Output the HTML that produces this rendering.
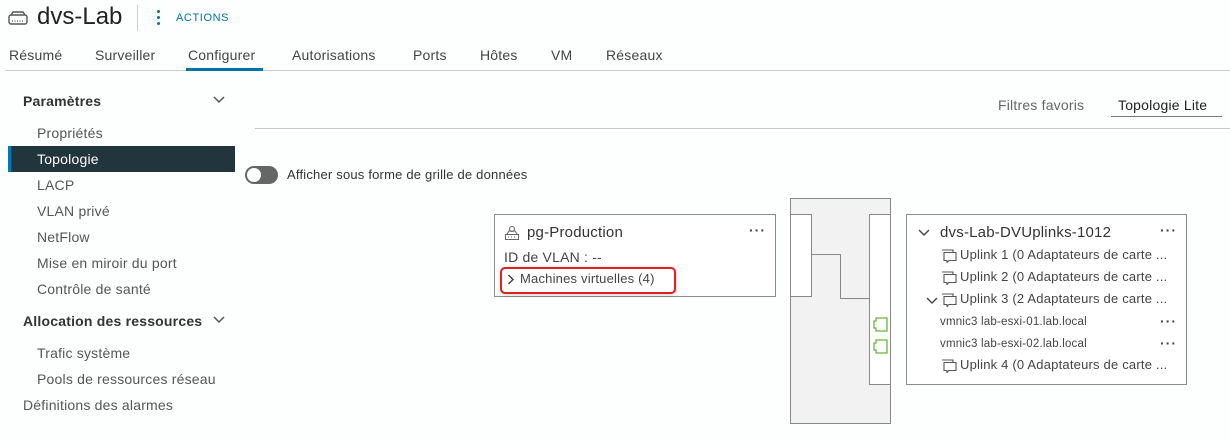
<!DOCTYPE html>
<html><head><meta charset="utf-8"><style>
*{margin:0;padding:0;box-sizing:border-box}
body{width:1230px;height:441px;background:#fdfefe;font-family:"Liberation Sans",sans-serif;color:#333;position:relative;overflow:hidden;letter-spacing:.2px}
.a{position:absolute;white-space:nowrap}
.t{font-size:14px;line-height:16px}
.s{font-size:14px;line-height:16px;color:#565656}
.b{font-weight:bold;font-size:14px;color:#333}
.dots{position:absolute;font-size:14px;letter-spacing:1px;color:#444;font-weight:bold}
</style></head><body>
<svg class="a" style="left:8px;top:11px" width="20" height="14" viewBox="0 0 20 14"><rect x="1" y="4" width="18" height="9" rx="2" fill="none" stroke="#555" stroke-width="1.4"/><path d="M3 4 L5 1 H15 L17 4" fill="none" stroke="#555" stroke-width="1.4"/><path d="M4 10h1M6.5 10h1M9 10h1M11.5 10h1M14 10h1" stroke="#555" stroke-width="1.3"/></svg>
<div class="a" style="left:37px;top:3px;font-size:24px;color:#222;letter-spacing:0">dvs-Lab</div>
<div class="a" style="left:137px;top:5px;width:1px;height:26px;background:#ccc"></div>
<div class="a" style="left:157px;top:10px;width:3px;height:3px;border-radius:2px;background:#0072a3;box-shadow:0 6px 0 #0072a3,0 12px 0 #0072a3"></div>
<div class="a" style="left:176px;top:12px;font-size:11px;color:#0072a3;letter-spacing:.6px">ACTIONS</div>
<div class="a s" style="left:9px;top:47px;color:#444">Résumé</div>
<div class="a s" style="left:95px;top:47px;color:#444">Surveiller</div>
<div class="a s" style="left:188px;top:47px;color:#444">Configurer</div>
<div class="a s" style="left:292px;top:47px;color:#444">Autorisations</div>
<div class="a s" style="left:413px;top:47px;color:#444">Ports</div>
<div class="a s" style="left:480px;top:47px;color:#444">Hôtes</div>
<div class="a s" style="left:551px;top:47px;color:#444">VM</div>
<div class="a s" style="left:606px;top:47px;color:#444">Réseaux</div>
<div class="a" style="left:5px;top:70px;width:1225px;height:1px;background:#ccc"></div>
<div class="a" style="left:186px;top:68px;width:77px;height:3px;background:#0072a3"></div>
<div class="a b" style="left:23px;top:93px">Paramètres</div>
<svg class="a" style="left:213px;top:96px" width="12" height="8"><path d="M1 1l5 5 5-5" fill="none" stroke="#555" stroke-width="1.5"/></svg>
<div class="a s" style="left:37px;top:125px">Propriétés</div>
<div class="a" style="left:8px;top:146px;width:227px;height:26px;background:#22343c"></div>
<div class="a" style="left:8px;top:146px;width:3px;height:26px;background:#0079b8"></div>
<div class="a t" style="left:37px;top:151px;color:#fff">Topologie</div>
<div class="a s" style="left:37px;top:177px">LACP</div>
<div class="a s" style="left:37px;top:203px">VLAN privé</div>
<div class="a s" style="left:37px;top:229px">NetFlow</div>
<div class="a s" style="left:37px;top:255px">Mise en miroir du port</div>
<div class="a s" style="left:37px;top:281px">Contrôle de santé</div>
<div class="a b" style="left:23px;top:313px">Allocation des ressources</div>
<svg class="a" style="left:213px;top:316px" width="12" height="8"><path d="M1 1l5 5 5-5" fill="none" stroke="#555" stroke-width="1.5"/></svg>
<div class="a s" style="left:37px;top:345px">Trafic système</div>
<div class="a s" style="left:37px;top:371px">Pools de ressources réseau</div>
<div class="a s" style="left:23px;top:397px">Définitions des alarmes</div>
<div class="a s" style="left:998px;top:97px;color:#666">Filtres favoris</div>
<div class="a t" style="left:1118px;top:97px;color:#222">Topologie Lite</div>
<div class="a" style="left:1111px;top:116px;width:111px;height:1px;background:#777"></div>
<div class="a" style="left:255px;top:128px;width:975px;height:1px;background:#c8c8c8"></div>
<div class="a" style="left:245px;top:166px;width:33px;height:18px;border-radius:9px;background:#666"></div>
<div class="a" style="left:247px;top:168px;width:14px;height:14px;border-radius:7px;background:#fff"></div>
<div class="a" style="left:287px;top:167px;font-size:13px;color:#333">Afficher sous forme de grille de données</div>
<div class="a" style="left:494px;top:214px;width:282px;height:83px;border:1px solid #8c8c8c;background:#fff"></div>
<svg class="a" style="left:504px;top:225px" width="16" height="16" viewBox="0 0 16 16" fill="none" stroke="#666" stroke-width="1.1"><circle cx="8" cy="4" r="2.5"/><path d="M3 9l2-3h6l2 3M1.5 9.5h13v5h-13zM4 12h1M7 12h1M10 12h1"/></svg>
<div class="a" style="left:527px;top:224px;font-size:15px;color:#333">pg-Production</div>
<div class="dots" style="left:749px;top:222px">···</div>
<div class="a t" style="left:504px;top:249px;color:#444">ID de VLAN : --</div>
<div class="a" style="left:500px;top:267px;width:176px;height:27px;border:2px solid #e02020;border-radius:5px;box-shadow:0 1px 4px rgba(0,0,0,.2)"></div>
<svg class="a" style="left:507px;top:274px" width="8" height="11"><path d="M1.5 1l4.5 4.5-4.5 4.5" fill="none" stroke="#444" stroke-width="1.5"/></svg>
<div class="a" style="left:520px;top:271px;font-size:13px;color:#444">Machines virtuelles (4)</div>
<div class="a" style="left:790px;top:198px;width:101px;height:226px;border:1px solid #888;background:#f2f2f2"></div>
<div class="a" style="left:790px;top:214px;width:22px;height:83px;border:1px solid #888;background:#fff"></div>
<div class="a" style="left:869px;top:214px;width:22px;height:171px;border:1px solid #888;background:#fff"></div>
<svg class="a" style="left:811px;top:254px" width="60" height="50"><path d="M0 .5H29.5V44.5H58" fill="none" stroke="#888" stroke-width="1"/></svg>
<svg class="a" style="left:873px;top:317px" width="16" height="40" fill="none" stroke="#6db33f" stroke-width="1.3"><path d="M3 1h11v13H3V11H1V4h2z"/><path d="M3 23h11v13H3V33H1V26h2z"/></svg>
<div class="a" style="left:906px;top:214px;width:281px;height:171px;border:1px solid #8c8c8c;background:#fff"></div>
<svg class="a" style="left:918px;top:229px" width="12" height="8"><path d="M1 1l5 5 5-5" fill="none" stroke="#444" stroke-width="1.4"/></svg>
<div class="a" style="left:940px;top:224px;font-size:15px;color:#333">dvs-Lab-DVUplinks-1012</div>
<div class="dots" style="left:1160px;top:222px">···</div>
<svg width="0" height="0" style="position:absolute"><defs><symbol id="u" viewBox="0 0 16 14"><path d="M1 1h11v2M3 3.5h12v8H8l-2 2v-2H3z" fill="none" stroke="#555" stroke-width="1.1"/></symbol></defs></svg>
<svg class="a" style="left:941px;top:249px" width="16" height="14"><use href="#u"/></svg>
<div class="a" style="left:960px;top:247px;font-size:13px;color:#444">Uplink 1 (0 Adaptateurs de carte ...</div>
<svg class="a" style="left:941px;top:271px" width="16" height="14"><use href="#u"/></svg>
<div class="a" style="left:960px;top:269px;font-size:13px;color:#444">Uplink 2 (0 Adaptateurs de carte ...</div>
<svg class="a" style="left:926px;top:297px" width="12" height="8"><path d="M1 1l5 5 5-5" fill="none" stroke="#444" stroke-width="1.4"/></svg>
<svg class="a" style="left:941px;top:293px" width="16" height="14"><use href="#u"/></svg>
<div class="a" style="left:960px;top:291px;font-size:13px;color:#444">Uplink 3 (2 Adaptateurs de carte ...</div>
<div class="a" style="left:940px;top:316px;font-size:11.5px;color:#444">vmnic3 lab-esxi-01.lab.local</div>
<div class="dots" style="left:1160px;top:313px">···</div>
<div class="a" style="left:940px;top:338px;font-size:11.5px;color:#444">vmnic3 lab-esxi-02.lab.local</div>
<div class="dots" style="left:1160px;top:335px">···</div>
<svg class="a" style="left:941px;top:359px" width="16" height="14"><use href="#u"/></svg>
<div class="a" style="left:960px;top:357px;font-size:13px;color:#444">Uplink 4 (0 Adaptateurs de carte ...</div>
</body></html>
